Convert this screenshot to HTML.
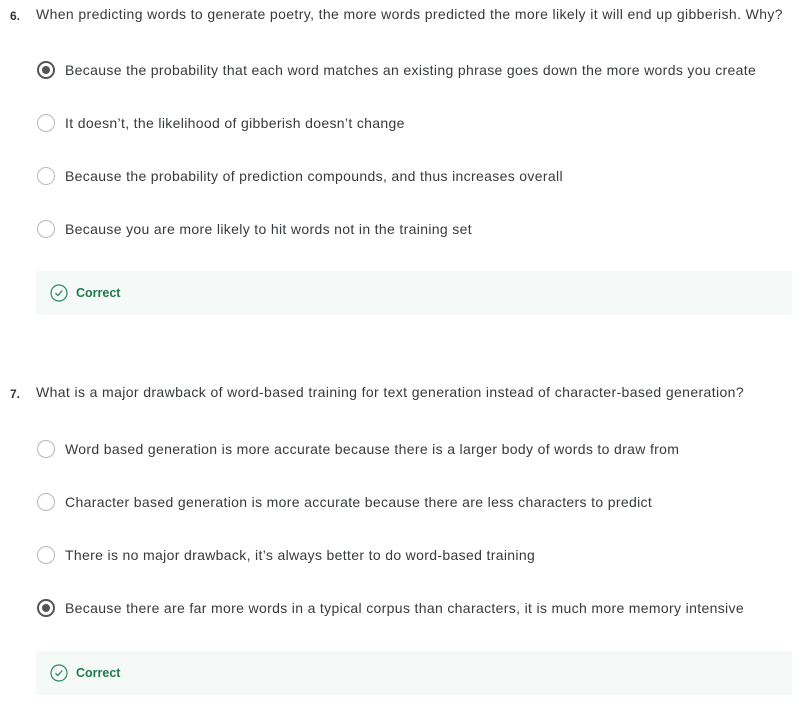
<!DOCTYPE html>
<html><head><style>
body{margin:0;width:804px;height:705px;background:#fff;font-family:"Liberation Sans",sans-serif;color:#373a3c;position:relative;overflow:hidden}
.a{position:absolute;white-space:nowrap;font-size:14px;letter-spacing:0.38px}
.q{left:36px}
.n{position:absolute;font-weight:bold;font-size:12px;color:#333}
.r{position:absolute;left:37px;width:18px;height:18px;border:1.5px solid #b8b8b8;border-radius:50%;box-sizing:border-box}
.r.s{border:2px solid #555}
.r.s:after{content:"";position:absolute;left:3px;top:3px;width:8px;height:8px;border-radius:50%;background:#555}
.o{left:65px;letter-spacing:0.34px}
.fb{position:absolute;left:36px;width:756px;height:44px;background:#f5f9f8}
.fb svg{position:absolute;left:14px;top:13px}
.fb span{position:absolute;left:40px;top:15px;font-weight:bold;font-size:12.5px;color:#1f7a4d}
</style></head><body>
<div class="n" style="left:10px;top:9px">6.</div>
<div class="a q" style="top:6px">When predicting words to generate poetry, the more words predicted the more likely it will end up gibberish. Why?</div>
<div class="r s" style="top:61px"></div><div class="a o" style="top:62px">Because the probability that each word matches an existing phrase goes down the more words you create</div>
<div class="r" style="top:114px"></div><div class="a o" style="top:115px">It doesn’t, the likelihood of gibberish doesn’t change</div>
<div class="r" style="top:167px"></div><div class="a o" style="top:168px">Because the probability of prediction compounds, and thus increases overall</div>
<div class="r" style="top:220px"></div><div class="a o" style="top:221px">Because you are more likely to hit words not in the training set</div>
<div class="fb" style="top:271px"><svg width="18" height="18" viewBox="0 0 18 18"><circle cx="9" cy="9" r="8" fill="none" stroke="#2a8a5c" stroke-width="1.2"/><path d="M5.5 9.2l2.3 2.3 4.5-5" fill="none" stroke="#2a8a5c" stroke-width="1.3"/></svg><span>Correct</span></div>
<div class="n" style="left:10px;top:387px">7.</div>
<div class="a q" style="top:384px">What is a major drawback of word-based training for text generation instead of character-based generation?</div>
<div class="r" style="top:440px"></div><div class="a o" style="top:441px">Word based generation is more accurate because there is a larger body of words to draw from</div>
<div class="r" style="top:493px"></div><div class="a o" style="top:494px">Character based generation is more accurate because there are less characters to predict</div>
<div class="r" style="top:546px"></div><div class="a o" style="top:547px">There is no major drawback, it’s always better to do word-based training</div>
<div class="r s" style="top:599px"></div><div class="a o" style="top:600px">Because there are far more words in a typical corpus than characters, it is much more memory intensive</div>
<div class="fb" style="top:651px"><svg width="18" height="18" viewBox="0 0 18 18"><circle cx="9" cy="9" r="8" fill="none" stroke="#2a8a5c" stroke-width="1.2"/><path d="M5.5 9.2l2.3 2.3 4.5-5" fill="none" stroke="#2a8a5c" stroke-width="1.3"/></svg><span>Correct</span></div>
</body></html>
